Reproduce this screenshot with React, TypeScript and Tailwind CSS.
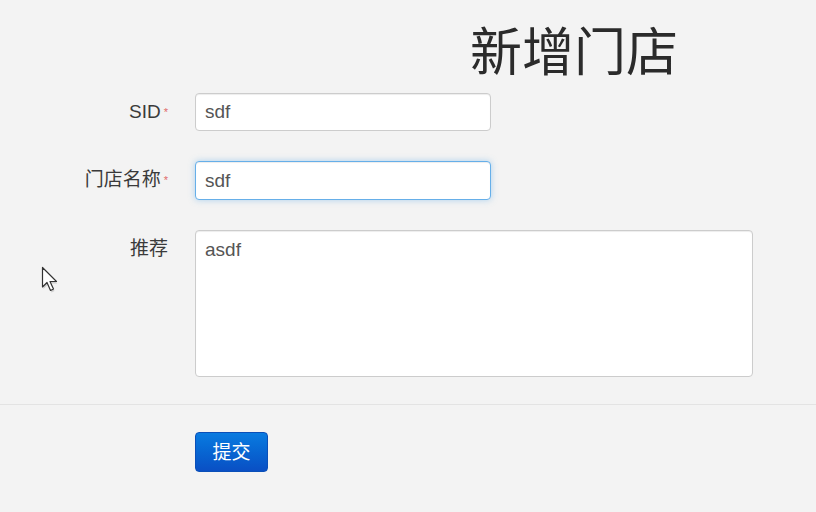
import React from 'react';

const Field: React.FC<{ label: string; required?: boolean; children: React.ReactNode }> = ({ label, required, children }) => (
  <div className="flex items-start">
    <label className="w-[170px] shrink-0 pt-[8px] pr-[2px] text-right text-[19px] leading-[22px] text-[#3a3a3a]">
      {label}
      {required && <span className="ml-[3px] align-top text-[11px] text-[#e06a6a]">*</span>}
    </label>
    <div className="ml-[25px]">{children}</div>
  </div>
);

const Cursor = () => (
  <svg className="absolute left-[41px] top-[266px]" width="22" height="30" viewBox="0 0 22 30">
    <path d="M2.5 3.5 L2.5 23 L7 18.5 L10.5 26.5 L13.5 25 L10 17.5 L16.5 17.5 Z" fill="rgba(0,0,0,0.15)" />
    <path d="M1.5 1.5 L1.5 21 L6 16.5 L9.5 24.5 L12.5 23 L9 15.5 L15.5 15.5 Z" fill="#fff" stroke="#333" strokeWidth="1.2" strokeLinejoin="round" />
  </svg>
);

export default function App() {
  return (
    <div
      className="relative h-[512px] w-[816px] overflow-hidden bg-[#f3f3f3]"
      style={{ fontFamily: '"Liberation Sans", "Noto Sans CJK SC", sans-serif' }}
    >
      <h1
        className="pl-[470px] pt-[18px] text-[52px] leading-[62px] font-normal text-[#2b2b2b]"
        style={{ fontFamily: '"Noto Sans CJK SC", serif' }}
      >
        新增门店
      </h1>

      <div className="mt-[13px] flex flex-col gap-[30px]">
        <Field label="SID" required>
          <input
            defaultValue="sdf"
            className="h-[38px] w-[296px] rounded-[4px] border border-[#ccc] bg-white px-[9px] text-[19px] text-[#555] shadow-[inset_0_1px_1px_rgba(0,0,0,0.075)] outline-none"
          />
        </Field>
        <Field label="门店名称" required>
          <input
            defaultValue="sdf"
            className="h-[39px] w-[296px] rounded-[4px] border border-[#66afe9] bg-white px-[9px] text-[19px] text-[#555] shadow-[inset_0_1px_1px_rgba(0,0,0,0.075),0_0_6px_rgba(102,175,233,0.5)] outline-none"
          />
        </Field>
        <Field label="推荐">
          <textarea
            defaultValue="asdf"
            className="block h-[147px] w-[558px] resize-none rounded-[4px] border border-[#ccc] bg-white px-[9px] py-[8px] text-[19px] leading-[22px] text-[#555] shadow-[inset_0_1px_1px_rgba(0,0,0,0.075)] outline-none"
          />
        </Field>
      </div>

      <div className="mt-[27px] border-t border-[#e3e3e3] pl-[195px] pt-[27px]">
        <button className="h-[40px] w-[73px] rounded-[4px] border border-[#0a4fb8] bg-gradient-to-b from-[#0a7be0] to-[#0a4fc4] pt-[3px] text-[19px] text-white">
          提交
        </button>
      </div>

      <Cursor />
    </div>
  );
}
